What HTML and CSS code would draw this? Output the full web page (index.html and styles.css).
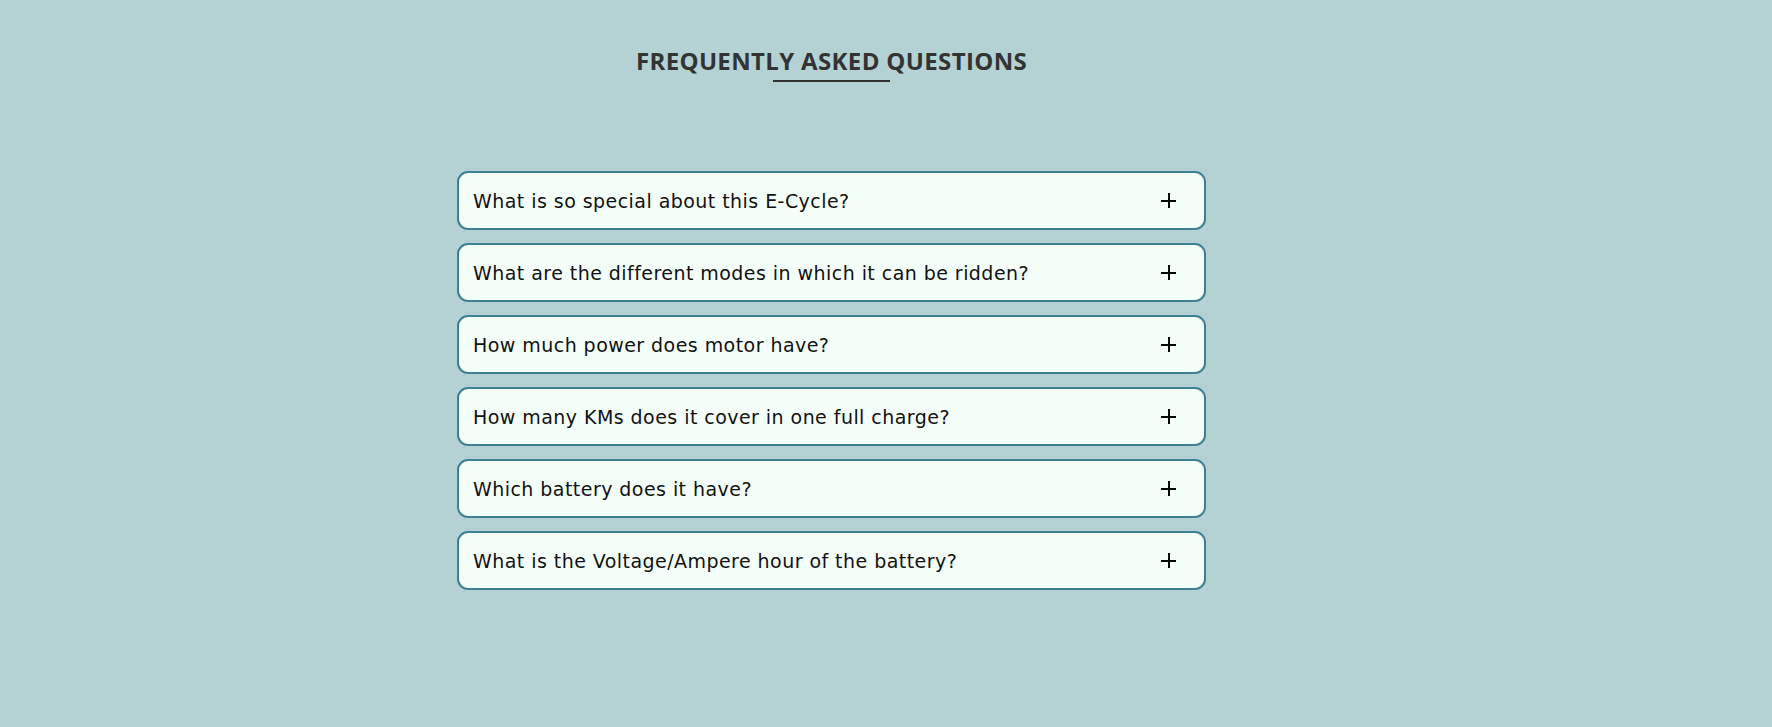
FILE: index.html
```html
<!DOCTYPE html>
<html lang="en">
<head>
<meta charset="utf-8">
<title>FAQ</title>
<link rel="stylesheet" href="styles.css">
</head>
<body>
<main class="page">
  <header class="faq-head">
    <h1 class="faq-title">FREQUENTLY ASKED QUESTIONS</h1>
    <span class="faq-line"></span>
  </header>
  <section class="faq-list">
    <div class="faq-item"><span class="q">What is so special about this E-Cycle?</span><span class="plus"></span></div>
    <div class="faq-item"><span class="q">What are the different modes in which it can be ridden?</span><span class="plus"></span></div>
    <div class="faq-item"><span class="q">How much power does motor have?</span><span class="plus"></span></div>
    <div class="faq-item"><span class="q">How many KMs does it cover in one full charge?</span><span class="plus"></span></div>
    <div class="faq-item"><span class="q">Which battery does it have?</span><span class="plus"></span></div>
    <div class="faq-item"><span class="q">What is the Voltage/Ampere hour of the battery?</span><span class="plus"></span></div>
  </section>
</main>
</body>
</html>
```

FILE: styles.css
```css
html, body {
  margin: 0;
  padding: 0;
  background: #b4d2d4;
  height: 100%;
}
body {
  font-family: "Open Sans", "Liberation Sans", sans-serif;
}
.page {
  width: 1663px;
  display: flex;
  flex-direction: column;
  align-items: center;
  padding-top: 46px;
}
.faq-head {
  display: flex;
  flex-direction: column;
  align-items: center;
}
.faq-title {
  margin: 0;
  font-size: 24px;
  font-weight: 700;
  color: #333333;
  line-height: 30px;
  letter-spacing: 0.35px;
}
.faq-line {
  display: block;
  width: 117px;
  height: 2px;
  background: #333333;
  margin-top: 4px;
}
.faq-list {
  margin-top: 89px;
  display: flex;
  flex-direction: column;
  gap: 13px;
  width: 749px;
}
.faq-item {
  box-sizing: border-box;
  height: 59px;
  border: 2px solid #3f8090;
  border-radius: 11px;
  background: #f5fffa;
  display: flex;
  align-items: center;
  justify-content: space-between;
  padding: 0 28px 0 14px;
}
.q {
  font-family: "DejaVu Sans", "Open Sans", sans-serif;
  font-size: 19px;
  letter-spacing: 0.45px;
  color: #111;
}
.plus {
  position: relative;
  width: 15px;
  height: 15px;
}
.plus::before, .plus::after {
  content: "";
  position: absolute;
  background: #000;
}
.plus::before {
  left: 0; right: 0; top: 6.5px; height: 2px;
}
.plus::after {
  top: 0; bottom: 0; left: 6.5px; width: 2px;
}
```
